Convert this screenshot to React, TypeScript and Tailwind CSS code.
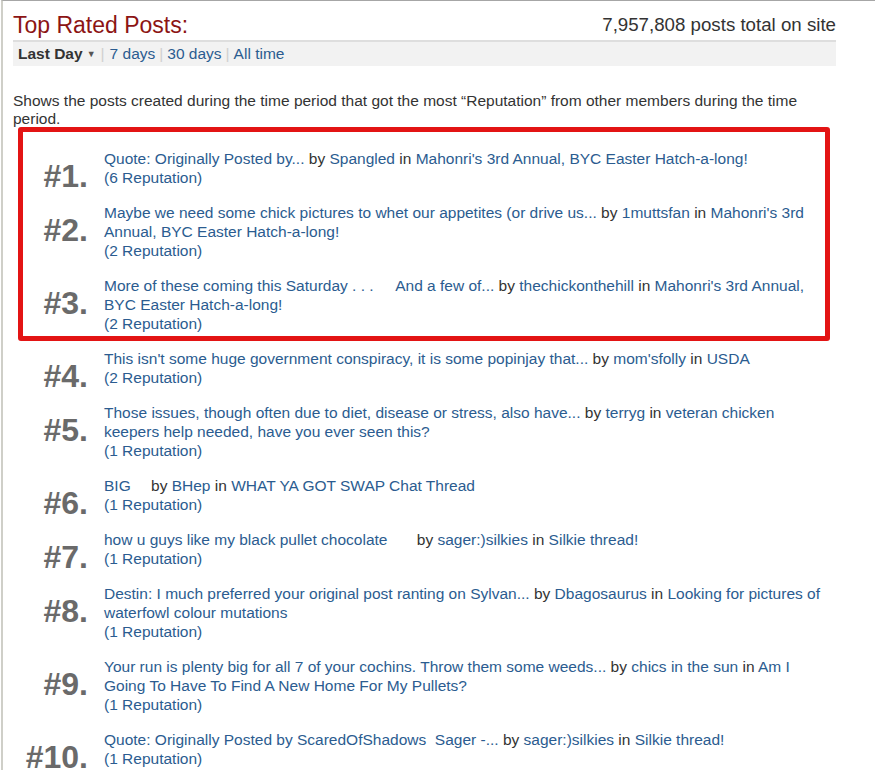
type Post = {
  title: string;
  gap?: string;
  author: string;
  thread: string;
  rep: number;
};

const EASTER = "Mahonri's 3rd Annual, BYC Easter Hatch-a-long!";

const posts: Post[] = [
  { title: 'Quote: Originally Posted by...', author: 'Spangled', thread: EASTER, rep: 6 },
  {
    title: 'Maybe we need some chick pictures to whet our appetites (or drive us...',
    author: '1muttsfan',
    thread: EASTER,
    rep: 2,
  },
  {
    title: 'More of these coming this Saturday . . .\u00a0\u00a0\u00a0\u00a0\u00a0And a few of...',
    author: 'thechickonthehill',
    thread: EASTER,
    rep: 2,
  },
  {
    title: "This isn't some huge government conspiracy, it is some popinjay that...",
    author: "mom'sfolly",
    thread: 'USDA',
    rep: 2,
  },
  {
    title: 'Those issues, though often due to diet, disease or stress, also have...',
    author: 'terryg',
    thread: 'veteran chicken keepers help needed, have you ever seen this?',
    rep: 1,
  },
  { title: 'BIG', gap: 'w-[16px]', author: 'BHep', thread: 'WHAT YA GOT SWAP Chat Thread', rep: 1 },
  {
    title: 'how u guys like my black pullet chocolate',
    gap: 'w-[25px]',
    author: 'sager:)silkies',
    thread: 'Silkie thread!',
    rep: 1,
  },
  {
    title: 'Destin: I much preferred your original post ranting on Sylvan...',
    author: 'Dbagosaurus',
    thread: 'Looking for pictures of waterfowl colour mutations',
    rep: 1,
  },
  {
    title: 'Your run is plenty big for all 7 of your cochins. Throw them some weeds...',
    author: 'chics in the sun',
    thread: 'Am I Going To Have To Find A New Home For My Pullets?',
    rep: 1,
  },
  {
    title: 'Quote: Originally Posted by ScaredOfShadows\u00a0\u00a0Sager -...',
    author: 'sager:)silkies',
    thread: 'Silkie thread!',
    rep: 1,
  },
];

const PostRow = ({ post, rank }: { post: Post; rank: number }) => (
  <li className="flex items-start gap-[16px]">
    <div className="w-[75px] shrink-0 text-right text-[32px] leading-[54px] font-bold text-[#6a6a6a]">
      #{rank}.
    </div>
    <div className="flex-1 pr-[8px] pb-[16px] leading-[19px]">
      <div>
        <a className="text-[#2b5c90]">{post.title}</a>
        {post.gap && <span className={`inline-block ${post.gap}`} />} by{' '}
        <a className="text-[#2b5c90]">{post.author}</a> in <a className="text-[#2b5c90]">{post.thread}</a>
      </div>
      <div className="text-[#2b5c90]">({post.rep} Reputation)</div>
    </div>
  </li>
);

export default function App() {
  return (
    <div
      className="min-h-screen bg-white pl-px text-[15.5px] text-[#333]"
      style={{ fontFamily: '"Liberation Sans", Arial, sans-serif' }}
    >
      <div className="min-h-screen border-t border-l-2 border-t-[#a6a6a6] border-l-[#cfcfc8] pr-[39px] pl-[10px]">
        <div className="flex items-start justify-between pt-[10px]">
          <h1 className="text-[23px] leading-[28px] text-[#8c1414]">Top Rated Posts:</h1>
          <div className="text-[18.7px] leading-[28px] text-[#333]">7,957,808 posts total on site</div>
        </div>

        <div className="mt-[1px] flex h-[26px] items-center border-t-2 border-[#dedede] bg-[#f2f2f2] pl-[5px] leading-[24px]">
          <span className="font-bold text-[#333]">Last Day</span>
          <span className="ml-[4px] text-[9px] text-[#555]">▼</span>
          <span className="mx-[5px] text-[#d0d0d0]">|</span>
          <a className="text-[#2b5c90]">7 days</a>
          <span className="mx-[4px] text-[#d0d0d0]">|</span>
          <a className="text-[#2b5c90]">30 days</a>
          <span className="mx-[4px] text-[#d0d0d0]">|</span>
          <a className="text-[#2b5c90]">All time</a>
        </div>

        <p className="mt-[26px] leading-[18px]">
          Shows the posts created during the time period that got the most “Reputation” from other members during
          the time period.
        </p>

        <div className="relative mt-[21px]">
          <ol>
            {posts.map((post, i) => (
              <PostRow key={i} post={post} rank={i + 1} />
            ))}
          </ol>
          <div className="pointer-events-none absolute top-[-22px] left-[5px] h-[214px] w-[812px] rounded-[3px] border-[5px] border-[#e31414]" />
        </div>
      </div>
    </div>
  );
}
